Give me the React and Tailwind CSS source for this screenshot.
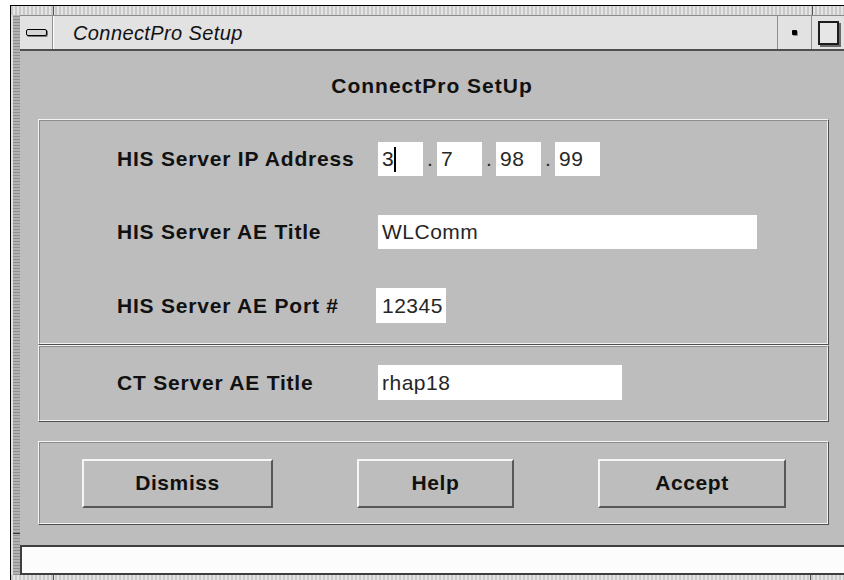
import React from 'react'

// Motif-style "ConnectPro Setup" dialog

const font = { fontFamily: '"Liberation Sans", Arial, sans-serif' }

const Panel = ({ className = '', children }) => (
    <div className={`border border-t-[#f4f4f4] border-l-[#f4f4f4] border-r-[#4e4e4e] border-b-[#4e4e4e] ${className}`}>
        <div className="h-full border border-t-[#8c8c8c] border-l-[#8c8c8c] border-r-[#f2f2f2] border-b-[#f2f2f2]">
            {children}
        </div>
    </div>
)

const Field = ({ width, children, className = '' }) => (
    <div className={`h-[34px] bg-white flex items-center pl-[4px] text-[21px] tracking-[0.5px] text-[#262626] ${width} ${className}`}>
        {children}
    </div>
)

const Label = ({ children }) => (
    <div className="w-[261px] shrink-0 text-[21px] font-bold tracking-[0.8px] text-[#111]">{children}</div>
)

const Button = ({ width, children }) => (
    <button className={`h-[49px] ${width} bg-[#bdbdbd] border-2 border-t-[#f6f6f6] border-l-[#f6f6f6] border-r-[#575757] border-b-[#575757] text-[21px] font-bold tracking-[0.6px] text-[#111]`}>
        {children}
    </button>
)

const Dot = () => <span className="w-[14px] text-center text-[21px] text-[#262626] self-end pb-[2px]">.</span>

export default function App() {
    return (
        <div className="w-[844px] h-[580px] bg-white overflow-hidden" style={font}>
            <div className="ml-[10px] mt-[5px] border-t border-l border-black flex flex-col">
                {/* top frame edge */}
                <div className="h-[9px] flex bg-[repeating-linear-gradient(90deg,#c8c8c8_0_2px,#e4e4e4_2px_4px)]">
                    <div className="w-[43px] border-r border-[#555]" />
                    <div className="w-[759px] border-r border-[#555]" />
                    <div className="flex-1" />
                </div>
                <div className="flex">
                    {/* left frame edge */}
                    <div className="w-[9px] shrink-0 flex flex-col border-l-2 border-[#e2e2e2] bg-[repeating-linear-gradient(0deg,#8e8e8e_0_1px,#b2b2b2_1px_3px)]">
                        <div className="h-[519px] border-b border-[#333]" />
                        <div className="flex-1" />
                    </div>
                    <div className="flex-1 flex flex-col">
                        {/* title bar */}
                        <div className="h-[36px] bg-[#e2e2e2] border-t border-[#8a8a8a] border-b-2 border-b-[#4f4f4f] flex">
                            <div className="w-[33px] flex items-center justify-center border-r border-[#8e8e8e] shadow-[1px_0_0_#ffffff]">
                                <div className="w-[21px] h-[7px] border-[1.5px] border-black rounded-[2px] bg-[#d6d6d6] shadow-[1px_1px_0_#777]" />
                            </div>
                            <div className="flex-1 flex items-center pl-[20px] text-[20px] italic tracking-[0.4px] text-[#111]">
                                ConnectPro Setup
                            </div>
                            <div className="w-[35px] flex items-center justify-center border-l border-[#8e8e8e] border-r">
                                <div className="w-[5px] h-[5px] bg-black rounded-[1px] shadow-[1px_1px_0_#888]" />
                            </div>
                            <div className="w-[32px] flex items-center pl-[6px]">
                                <div className="w-[21px] h-[24px] border-2 border-[#1c1c1c] bg-[#e6e6e6] shadow-[2px_2px_0_#6a6a6a]" />
                            </div>
                        </div>

                        {/* dialog body */}
                        <div className="h-[494px] bg-[#bdbdbd] flex flex-col">
                            <div className="h-[68px] flex items-center justify-center pt-[2px] text-[21px] font-bold tracking-[1px] text-[#111]">
                                ConnectPro SetUp
                            </div>

                            <div className="ml-[18px] mr-[15px] flex flex-col">
                                <Panel className="h-[226px]">
                                    <div className="flex flex-col pl-[77px] pt-[21px] gap-[39px]">
                                        <div className="flex items-center">
                                            <Label>HIS Server IP Address</Label>
                                            <div className="flex">
                                                <Field width="w-[45px]">
                                                    3<span className="inline-block w-[2px] h-[25px] bg-black ml-[0px]" />
                                                </Field>
                                                <Dot />
                                                <Field width="w-[45px]">7</Field>
                                                <Dot />
                                                <Field width="w-[45px]">98</Field>
                                                <Dot />
                                                <Field width="w-[45px]">99</Field>
                                            </div>
                                        </div>
                                        <div className="flex items-center">
                                            <Label>HIS Server AE Title</Label>
                                            <Field width="w-[379px]">WLComm</Field>
                                        </div>
                                        <div className="flex items-center">
                                            <Label>HIS Server AE Port #</Label>
                                            <Field width="w-[70px]" className="-ml-[2px] h-[35px] pl-[6px]">12345</Field>
                                        </div>
                                    </div>
                                </Panel>

                                <Panel className="h-[77px]">
                                    <div className="h-full flex items-center pl-[77px] pb-[2px]">
                                        <Label>CT Server AE Title</Label>
                                        <Field width="w-[244px]" className="h-[35px]">rhap18</Field>
                                    </div>
                                </Panel>

                                <Panel className="h-[84px] mt-[19px]">
                                    <div className="h-full flex items-center pl-[42px] gap-[84px]">
                                        <Button width="w-[191px]">Dismiss</Button>
                                        <Button width="w-[157px]">Help</Button>
                                        <Button width="w-[188px]">Accept</Button>
                                    </div>
                                </Panel>
                            </div>
                        </div>

                        {/* message line */}
                        <div className="h-[30px] bg-[#fcfcfc] border-2 border-r-0 border-[#3e3e3e]" />
                    </div>
                </div>
                {/* bottom frame edge */}
                <div className="h-[10px] flex bg-[repeating-linear-gradient(90deg,#c8c8c8_0_2px,#e4e4e4_2px_4px)]">
                    <div className="w-[43px] border-r border-[#555]" />
                    <div className="w-[757px] border-r border-[#555]" />
                    <div className="flex-1" />
                </div>
            </div>
        </div>
    )
}
